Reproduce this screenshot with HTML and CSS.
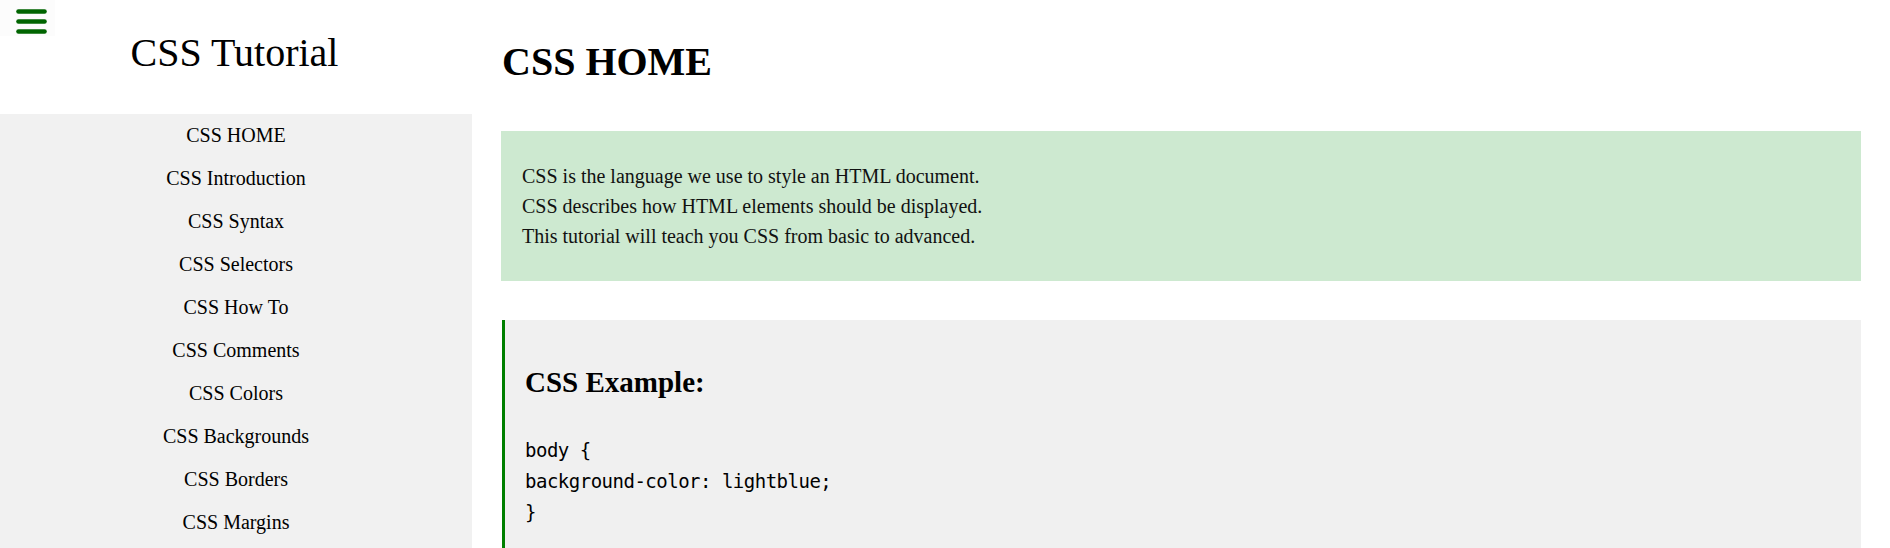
FILE: index.html
```html
<!DOCTYPE html>
<html lang="en">
<head>
<meta charset="utf-8">
<title>CSS Tutorial</title>
<link rel="stylesheet" href="styles.css">
</head>
<body>
<div class="page">
  <aside class="sidebar">
    <div class="side-head">
      <button class="menu-btn" aria-label="Menu">
        <svg width="32" height="26" viewBox="0 0 32 26">
          <line x1="2.5" y1="2.5" x2="28.5" y2="2.5"/>
          <line x1="2.5" y1="12.5" x2="28.5" y2="12.5"/>
          <line x1="2.5" y1="22.5" x2="28.5" y2="22.5"/>
        </svg>
      </button>
      <div class="side-title">CSS Tutorial</div>
    </div>
    <nav class="side-nav">
      <a href="#">CSS HOME</a>
      <a href="#">CSS Introduction</a>
      <a href="#">CSS Syntax</a>
      <a href="#">CSS Selectors</a>
      <a href="#">CSS How To</a>
      <a href="#">CSS Comments</a>
      <a href="#">CSS Colors</a>
      <a href="#">CSS Backgrounds</a>
      <a href="#">CSS Borders</a>
      <a href="#">CSS Margins</a>
    </nav>
  </aside>
  <main class="main">
    <h1 class="title">CSS HOME</h1>
    <div class="intro">
      <p>CSS is the language we use to style an HTML document.<br>
      CSS describes how HTML elements should be displayed.<br>
      This tutorial will teach you CSS from basic to advanced.</p>
    </div>
    <div class="example">
      <h2 class="example-title">CSS Example:</h2>
      <pre class="code">body {
background-color: lightblue;
}</pre>
    </div>
  </main>
</div>
</body>
</html>
```
FILE: styles.css
```css
html, body {
  margin: 0;
  padding: 0;
  background: #ffffff;
}

body {
  font-family: "Liberation Serif", "Times New Roman", serif;
  color: #000000;
  overflow: hidden;
}

.page {
  display: flex;
  align-items: stretch;
  min-height: 548px;
}

.sidebar {
  width: 472px;
  flex: 0 0 472px;
  display: flex;
  flex-direction: column;
}

.side-head {
  position: relative;
  height: 114px;
  box-sizing: border-box;
  padding-top: 30px;
  background: #ffffff;
}

.menu-btn {
  position: absolute;
  top: 0;
  left: 0;
  width: 55px;
  height: 36px;
  padding: 8px 0 0 16px;
  margin: 0;
  border: 0;
  background: #fcfcfc;
  box-sizing: border-box;
  display: block;
  text-align: left;
  cursor: pointer;
}

.menu-btn svg {
  display: block;
  stroke: #006400;
  stroke-width: 4.6;
  stroke-linecap: round;
}

.side-title {
  text-align: center;
  font-size: 40px;
  line-height: 46px;
  padding-right: 3px;
}

.side-nav {
  flex: 1;
  background: #f1f1f1;
  display: flex;
  flex-direction: column;
}

.side-nav a {
  display: block;
  text-align: center;
  font-size: 20px;
  line-height: 23px;
  padding: 10px 16px;
  color: #000000;
  text-decoration: none;
}

.main {
  flex: 1;
  padding: 39px 29px 0 29px;
  min-width: 0;
}

.title {
  margin: 0 0 46px 0;
  font-size: 40px;
  line-height: 46px;
  font-weight: bold;
  padding-left: 1px;
}

.intro {
  background: #cde9d0;
  padding: 30px 20px 30px 21px;
  height: 90px;
}

.intro p {
  margin: 0;
  font-size: 20px;
  line-height: 30px;
  color: #111111;
}

.example {
  margin-top: 39px;
  margin-left: 1px;
  background: #f0f0f0;
  border-left: 3px solid #008000;
  padding: 45px 20px 60px 20px;
}

.example-title {
  margin: 0 0 36px 0;
  font-size: 29px;
  line-height: 34px;
  font-weight: bold;
}

.code {
  margin: 0;
  font-family: "DejaVu Sans Mono", "Liberation Mono", monospace;
  font-size: 19px;
  letter-spacing: -0.5px;
  line-height: 31px;
  color: #000000;
}
```
